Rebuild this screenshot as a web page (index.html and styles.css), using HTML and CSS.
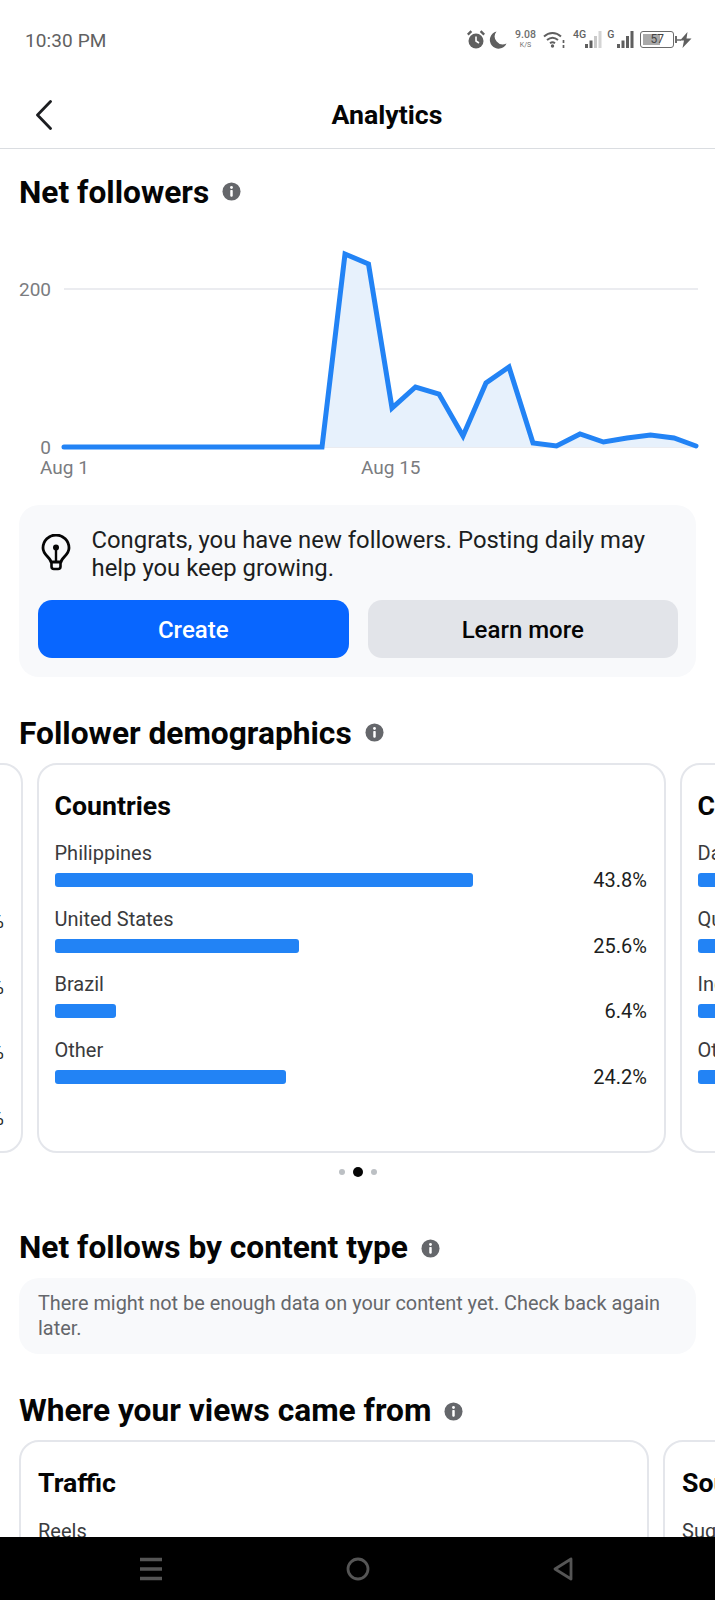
FILE: index.html
```html
<!DOCTYPE html>
<html lang="en">
<head>
<meta charset="utf-8">
<title>Analytics</title>
<link rel="stylesheet" href="styles.css">
</head>
<body>
<svg class="defs" width="0" height="0" aria-hidden="true">
  <symbol id="info" viewBox="0 0 20 20">
    <circle cx="10" cy="10" r="9.5" fill="#65676b"/>
    <circle cx="10" cy="5.8" r="1.5" fill="#fff"/>
    <rect x="8.7" y="8.4" width="2.6" height="7" rx="0.8" fill="#fff"/>
  </symbol>
</svg>
<div class="phone">
  <div class="status">
    <span class="time">10:30 PM</span>
    <div class="status-icons">
      <svg class="ic-alarm" width="18" height="19" viewBox="0 0 18 19"><circle cx="9" cy="11" r="7.5" fill="#5f5f5f"/><path d="M9 6.5V11l3 2" fill="none" stroke="#fff" stroke-width="1.6"/><path d="M0.8 4.6 4.4 1.2M17.2 4.6 13.6 1.2" stroke="#5f5f5f" stroke-width="2.4"/></svg>
      <svg class="ic-moon" width="18" height="18" viewBox="0 0 18 18"><path d="M7.500.5A8.700 8.700 0 1 0 17.500 12.500 8 8 0 0 1 7.500.5Z" fill="#5f5f5f"/></svg>
      <span class="speed"><b>9.08</b><i>K/S</i></span>
      <svg class="ic-wifi" width="22" height="17" viewBox="0 0 22 17"><path d="M1 5.5C6 .8 13 .8 18 5.5M4 9c3.500-3 7.500-3 11 0M7 12.300c1.700-1.300 3.300-1.300 5 0" fill="none" stroke="#5f5f5f" stroke-width="1.9"/><circle cx="9.500" cy="15" r="1.700" fill="#5f5f5f"/><path d="M20.500 9v3M20.500 14v3" stroke="#5f5f5f" stroke-width="1.700"/></svg>
      <span class="net net-4g">4G</span>
      <svg class="ic-bars" width="17" height="17" viewBox="0 0 17 17"><rect x="0" y="13" width="3" height="4" fill="#5f5f5f"/><rect x="4.500" y="9.500" width="3" height="7.500" fill="#5f5f5f"/><rect x="9" y="5" width="3" height="12" fill="#c9c9c9"/><rect x="13.500" y="0" width="3" height="17" fill="#d4d4d4"/></svg>
      <span class="net net-g">G</span>
      <svg class="ic-bars" width="17" height="17" viewBox="0 0 17 17"><rect x="0" y="13" width="3" height="4" fill="#5f5f5f"/><rect x="4.500" y="9.500" width="3" height="7.500" fill="#5f5f5f"/><rect x="9" y="5" width="3" height="12" fill="#5f5f5f"/><rect x="13.500" y="0" width="3" height="17" fill="#5f5f5f"/></svg>
      <span class="battery"><span class="battery-fill"></span><span class="battery-num">57</span></span>
      <span class="battery-tip"></span>
      <svg class="ic-bolt" width="16" height="16" viewBox="0 0 16 16"><path d="M10.500 0 3 8.500h4L5.500 16 14.500 6.500H9.500L10.500 0Z" fill="#5f5f5f"/><path d="M0 8h4" stroke="#5f5f5f" stroke-width="1.400"/></svg>
    </div>
  </div>

  <header class="appbar">
    <svg class="back" width="18" height="30" viewBox="0 0 18 30"><path d="M15.500 1.500 2.500 15l13 13.500" fill="none" stroke="#1c1e21" stroke-width="2.800" stroke-linecap="round" stroke-linejoin="round"/></svg>
    <h1 class="appbar-title">Analytics</h1>
  </header>

  <main class="content">
    <h2 class="heading heading-first">Net followers <svg class="info"><use href="#info"/></svg></h2>

    <svg class="chart" width="715" height="260" viewBox="0 0 715 260">
      <line class="grid" x1="64" y1="59" x2="698" y2="59"/>
      <line class="grid" x1="64" y1="217" x2="698" y2="217"/>
      <polygon class="area" points="322,217 345,24 368.500,34 392,178 415.500,157 439,164 463,206 486,153 509,137 533,213 556.500,216 580,204 603.500,212 627,208 650.500,205 674,208 696,216 696,217"/>
      <polyline class="line" points="64,217 322,217 345,24 368.500,34 392,178 415.500,157 439,164 463,206 486,153 509,137 533,213 556.500,216 580,204 603.500,212 627,208 650.500,205 674,208 696,216"/>
      <text class="axis" x="51" y="66" text-anchor="end">200</text>
      <text class="axis" x="51" y="224" text-anchor="end">0</text>
      <text class="axis" x="40" y="244">Aug 1</text>
      <text class="axis" x="361" y="244">Aug 15</text>
    </svg>

    <section class="tip">
      <div class="tip-body">
        <svg class="bulb" width="30" height="37" viewBox="0 0 30 37"><path d="M10 28C9.500 23.500 2 21 2 14a13 13 0 0 1 26 0c0 7-7.500 9.500-8 14H10Z" fill="none" stroke="#050505" stroke-width="2.800" stroke-linejoin="round"/><path d="M10.500 28v4.500a2.500 2.500 0 0 0 2.500 2.500h4a2.500 2.500 0 0 0 2.500-2.500V28" fill="none" stroke="#050505" stroke-width="2.600"/><circle cx="15" cy="13.500" r="3" fill="#050505"/><path d="M15 14v14" stroke="#050505" stroke-width="2.400"/></svg>
        <p class="tip-text">Congrats, you have new followers. Posting daily may help you keep growing.</p>
      </div>
      <div class="tip-actions">
        <button class="btn btn-primary">Create</button>
        <button class="btn btn-secondary">Learn more</button>
      </div>
    </section>

    <h2 class="heading heading-demo">Follower demographics <svg class="info"><use href="#info"/></svg></h2>

    <div class="carousel carousel-demo">
      <article class="card card-prev">
        <h3 class="card-title">Age</h3>
        <div class="rows rows-prev">
          <div class="row"><span class="row-label">18-24</span><span class="bar" style="width:200px"></span><span class="pct">21.4%</span></div>
          <div class="row"><span class="row-label">25-34</span><span class="bar" style="width:300px"></span><span class="pct">35.6%</span></div>
          <div class="row"><span class="row-label">35-44</span><span class="bar" style="width:200px"></span><span class="pct">24.2%</span></div>
          <div class="row"><span class="row-label">45-54</span><span class="bar" style="width:100px"></span><span class="pct">12.8%</span></div>
        </div>
      </article>
      <article class="card">
        <h3 class="card-title">Countries</h3>
        <div class="rows">
          <div class="row"><span class="row-label">Philippines</span><span class="bar" style="width:418px"></span><span class="pct">43.8%</span></div>
          <div class="row"><span class="row-label">United States</span><span class="bar" style="width:244px"></span><span class="pct">25.6%</span></div>
          <div class="row"><span class="row-label">Brazil</span><span class="bar" style="width:61px"></span><span class="pct">6.4%</span></div>
          <div class="row"><span class="row-label">Other</span><span class="bar" style="width:231px"></span><span class="pct">24.2%</span></div>
        </div>
      </article>
      <article class="card">
        <h3 class="card-title">Cities</h3>
        <div class="rows">
          <div class="row"><span class="row-label">Dasmariñas</span><span class="bar" style="width:120px"></span><span class="pct">7.2%</span></div>
          <div class="row"><span class="row-label">Quezon City</span><span class="bar" style="width:110px"></span><span class="pct">6.6%</span></div>
          <div class="row"><span class="row-label">Indianapolis</span><span class="bar" style="width:60px"></span><span class="pct">3.2%</span></div>
          <div class="row"><span class="row-label">Other</span><span class="bar" style="width:400px"></span><span class="pct">83.0%</span></div>
        </div>
      </article>
    </div>

    <div class="dots"><span class="dot"></span><span class="dot dot-on"></span><span class="dot"></span></div>

    <h2 class="heading heading-type">Net follows by content type <svg class="info"><use href="#info"/></svg></h2>
    <p class="note">There might not be enough data on your content yet. Check back again later.</p>

    <h2 class="heading heading-views">Where your views came from <svg class="info"><use href="#info"/></svg></h2>
    <div class="carousel carousel-views">
      <article class="card card-views">
        <h3 class="card-title">Traffic</h3>
        <div class="rows rows-views"><div class="row"><span class="row-label">Reels</span></div></div>
      </article>
      <article class="card card-views">
        <h3 class="card-title">Source</h3>
        <div class="rows rows-views"><div class="row"><span class="row-label">Suggested</span></div></div>
      </article>
    </div>
  </main>

  <nav class="sysnav">
    <svg width="22" height="24" viewBox="0 0 22 24"><path d="M0 2.500h22M0 12h22M0 21.500h22" stroke="#555" stroke-width="3.600"/></svg>
    <svg width="24" height="24" viewBox="0 0 24 24"><circle cx="12" cy="12" r="10" fill="none" stroke="#555" stroke-width="2.800"/></svg>
    <svg width="20" height="24" viewBox="0 0 20 24"><path d="M18 2 2 12l16 10Z" fill="none" stroke="#555" stroke-width="2.800" stroke-linejoin="round"/></svg>
  </nav>
</div>
</body>
</html>
```
FILE: styles.css
```css
* { box-sizing: border-box; }
html, body { margin: 0; padding: 0; background: #fff; }
body { font-family: Roboto, "Liberation Sans", sans-serif; color: #050505; }
.defs { position: absolute; }

.phone { width: 715px; height: 1600px; display: flex; flex-direction: column; overflow: hidden; }

.status { height: 76px; flex: none; display: flex; align-items: center; justify-content: space-between; padding: 4px 25px 0 25px; color: #616161; }
.time { font-size: 19px; letter-spacing: .1px; }
.status-icons { display: flex; align-items: center; width: 223px; margin-top: -1px; }
.status-icons > * { flex: none; }
.ic-moon { margin-left: 4px; }
.speed { display: flex; flex-direction: column; align-items: center; width: 23px; margin-left: 7px; color: #6e6e6e; line-height: 1; }
.speed b { font-weight: 500; font-size: 10.500px; }
.speed i { font-style: normal; font-size: 7px; margin-top: 2px; }
.ic-wifi { margin-left: 6px; }
.net { font-size: 10.500px; font-weight: 500; align-self: flex-start; line-height: 12px; margin-top: -1px; }
.net-4g { margin-left: 8px; }
.net-g { margin-left: 5px; }
.net-4g + .ic-bars { margin-left: -1px; }
.net-g + .ic-bars { margin-left: 3px; }
.battery { position: relative; width: 34px; height: 17px; border: 1.500px solid #6a6a6a; border-radius: 3px; margin-left: 6px; padding: 2px; display: block; }
.battery-fill { display: block; width: 60%; height: 100%; background: #a9a9a9; }
.battery-num { position: absolute; inset: 0; text-align: center; font-size: 12px; line-height: 14px; color: #444; }
.battery-tip { width: 2px; height: 7px; background: #6a6a6a; margin-left: 1px; }
.ic-bolt { margin-left: 0; }

.appbar { height: 73px; flex: none; display: flex; align-items: center; justify-content: center; position: relative; border-bottom: 1px solid #dadde1; }
.back { position: absolute; left: 35px; top: 24px; }
.appbar-title { margin: 6px 0 0 0; padding-left: 59px; font-size: 26.700px; line-height: 30px; font-weight: 700; }

.content { flex: 1; min-height: 0; overflow: hidden; }

.heading { margin: 0 0 0 19px; display: flex; align-items: center; gap: 13px; font-size: 31.700px; line-height: 36px; font-weight: 700; letter-spacing: 0; white-space: nowrap; }
.heading-first { margin-top: 26px; }
.heading-demo { margin-top: 39px; }
.heading-first .info, .heading-demo .info { margin-bottom: 4px; }
.heading-type { margin-top: 53px; }
.heading-views { margin-top: 39px; }
.info { width: 19px; height: 19px; flex: none; }

.chart { display: block; margin-top: 19px; }
.grid { stroke: #e4e6eb; stroke-width: 1.500; }
.area { fill: #e7f1fc; }
.line { fill: none; stroke: #2283f5; stroke-width: 5; stroke-linejoin: miter; stroke-linecap: round; }
.axis { font-family: Roboto, "Liberation Sans", sans-serif; font-size: 19px; fill: #7a7c80; }

.tip { margin: 15px 19px 0 19px; padding: 21px 18px 19px 19px; background: #f8f9fb; border-radius: 20px; }
.tip-body { display: flex; align-items: flex-start; gap: 20.500px; }
.bulb { flex: none; margin: 8px 0 0 3px; }
.tip-text { margin: 0; font-size: 23.850px; line-height: 28px; color: #1c1e21; }
.tip-actions { display: grid; grid-template-columns: 1fr 1fr; gap: 19px; margin-top: 18px; }
.btn { height: 58px; border: 0; border-radius: 14px; padding: 2px 0 0; font: 500 24px Roboto, "Liberation Sans", sans-serif; }
.btn-primary { background: #0866ff; color: #fff; }
.btn-secondary { background: #e2e4e9; color: #050505; }

.carousel { display: flex; gap: 14px; height: 390px; }
.carousel-demo { margin-top: 11px; }
.card { flex: none; width: 629px; height: 100%; padding: 27px 17px 0 15.500px; border: 2px solid #e4e6eb; border-radius: 20px; background: #fff; }
.card-prev { margin-left: -606px; }
.card-title { margin: 0; font-size: 26.700px; line-height: 28px; font-weight: 700; }
.rows { display: flex; flex-direction: column; gap: 19.600px; margin-top: 21px; }
.rows-prev { margin-top: 62px; }
.row { display: grid; grid-template-columns: 1fr auto; row-gap: 8px; align-items: center; }
.row-label { grid-column: 1 / -1; font-size: 20px; line-height: 24px; color: #3a3b3d; }
.bar { height: 14px; background: #2283f5; border-radius: 3px; }
.pct { font-size: 20px; line-height: 14px; color: #1c1e21; }

.dots { display: flex; align-items: center; justify-content: center; gap: 8px; height: 10px; margin-top: 14px; }
.dot { width: 6px; height: 6px; border-radius: 50%; background: #bcc0c4; }
.dot-on { width: 10px; height: 10px; background: #050505; }

.note { margin: 12px 19px 0 19px; padding: 13px 19px; background: #f8f9fb; border-radius: 20px; font-size: 19.900px; line-height: 25px; color: #65676b; }

.carousel-views { margin: 11px 0 0 19px; gap: 14px; }
.card-views { width: 630px; padding: 27px 17px 0 17px; }
.rows-views { margin-top: 22px; }

.sysnav { height: 63px; flex: none; background: #000; display: flex; align-items: center; padding: 0 142px 0 140px; justify-content: space-between; }
```
